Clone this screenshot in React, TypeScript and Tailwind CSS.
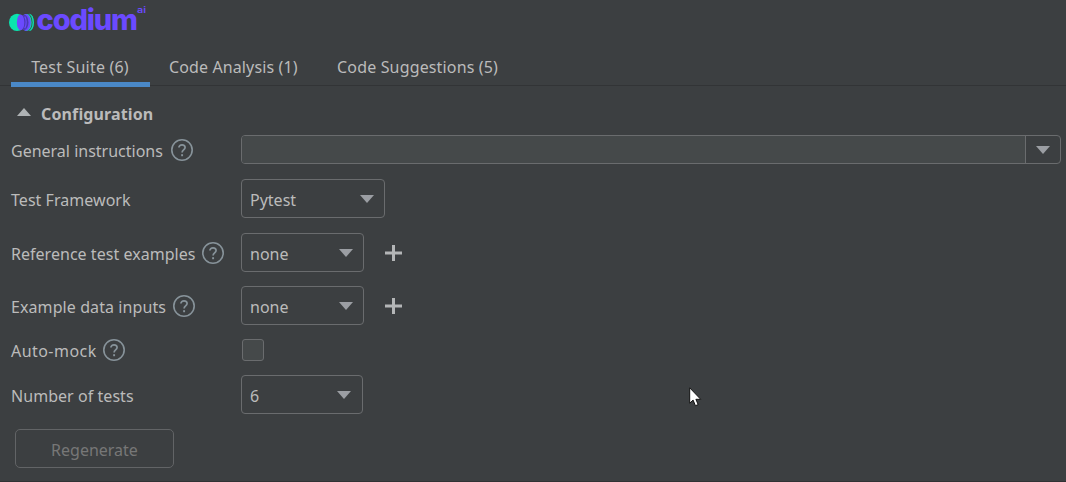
import React from "react";

function Help() {
  return (
    <svg className="h-6 w-6 shrink-0" viewBox="0 0 24 24" fill="none" stroke="#87939a" strokeWidth="1.6">
      <circle cx="12" cy="12" r="10.2" />
      <path d="M8.9 9.6C8.9 7.8 10.2 6.8 12 6.8s3.1 1.1 3.1 2.7c0 2.4-3 2.5-3 5" strokeWidth="1.7" />
      <path d="M12.1 16.2v2" strokeWidth="1.9" />
    </svg>
  );
}

function Arrow({ up = false }: { up?: boolean }) {
  return (
    <svg className="h-[8px] w-[14px] shrink-0" viewBox="0 0 14 8" fill={up ? "#afb3b5" : "#9b9ea3"}>
      <path d={up ? "M0 8 7 0l7 8z" : "M0 0h14L7 8z"} />
    </svg>
  );
}

function Plus() {
  return (
    <svg className="ml-[21px] h-4 w-[17px]" viewBox="0 0 17 16" fill="none" stroke="#b4b6b7" strokeWidth="3">
      <path d="M8.5 0v16M0 8h17" />
    </svg>
  );
}

function Select({ value, width }: { value: string; width: string }) {
  return (
    <div className={`flex h-[39px] items-center justify-between rounded-[4px] border border-[#6a6c6e] pl-[8px] ${width}`}>
      <span className="pt-[3px]">{value}</span>
      <Arrow />
    </div>
  );
}

function Row({ label, tracking = "", className, gap = "", help = false, children }: {
  label: string; tracking?: string; className: string; gap?: string; help?: boolean; children: React.ReactNode;
}) {
  return (
    <div className={`flex items-center ${className}`}>
      <div className="flex w-[230px] shrink-0 items-center">
        <span className={`whitespace-nowrap pt-[3px] ${tracking}`}>{label}</span>
        {help && <span className={gap}><Help /></span>}
      </div>
      {children}
    </div>
  );
}

function Logo() {
  return (
    <svg className="block h-[36px] w-[160px]" viewBox="0 0 160 36">
      <ellipse cx="17" cy="22.4" rx="8" ry="8.7" fill="#0be3ae" />
      <ellipse cx="29.3" cy="22.4" rx="4.7" ry="8.6" fill="#0be3ae" />
      <ellipse cx="27.5" cy="22.4" rx="5" ry="8.8" fill="#3c3f41" />
      <ellipse cx="26.8" cy="22.4" rx="4.9" ry="8.5" fill="#0be3ae" />
      <ellipse cx="25.9" cy="22.4" rx="4.9" ry="8.5" fill="#6b4aff" />
      <ellipse cx="24" cy="22.4" rx="4.5" ry="7.6" fill="#4a38b5" />
      <ellipse cx="20.6" cy="22.4" rx="3.7" ry="7.9" fill="#6b4aff" />
      <path d="M24.8 16.5q2.8 5.9 0 11.8" fill="none" stroke="#6b4aff" strokeWidth="1.2" />
      <text x="36.6" y="30.4" textLength="100" lengthAdjust="spacingAndGlyphs" fill="#6b4aff" className="font-['Inter'] text-[28.5px] font-extrabold tracking-[-1.2px]">codium</text>
      <text x="137" y="13" textLength="9" lengthAdjust="spacingAndGlyphs" fill="#6b4aff" className="font-['Inter'] text-[9px] font-semibold">ai</text>
    </svg>
  );
}

export default function App() {
  return (
    <div className="relative h-[482px] w-full overflow-hidden border-b border-[#303234] bg-[#3c3f41] font-['Noto_Sans',sans-serif] text-[16px] leading-[22px] text-[#bbbbbb]">
      <Logo />
      <nav className="flex h-[50px] border-b border-[#323436] pl-[11px]">
        <div className="flex h-[51px] w-[139px] shrink-0 items-center justify-center border-b-[5px] border-[#4a88c7] pt-[15px] pr-[1px]">
          <span className="tracking-[0.2px]">Test Suite (6)</span>
        </div>
        <div className="pt-[20px] pl-[19px] tracking-[0.12px]">Code Analysis (1)</div>
        <div className="pt-[20px] pl-[39.5px] tracking-[0.15px]">Code Suggestions (5)</div>
      </nav>
      <main className="pl-[11px]">
        <div className="flex h-[49px] items-center pt-[4px] pl-[5.5px]">
          <div className="-mt-[2px] flex"><Arrow up /></div>
          <h2 className="pt-[3px] pl-[10.5px] font-bold tracking-[0.13px]">Configuration</h2>
        </div>
        <Row label="General instructions" className="h-[29px] pr-[5px]" gap="ml-[7px]" help>
          <div className="flex h-[29px] flex-1 overflow-hidden rounded-[4px] border border-[#6a6c6e]">
            <div className="flex-1 bg-[#45494a]" />
            <div className="flex w-[35px] items-center justify-center border-l border-[#6a6c6e]"><Arrow /></div>
          </div>
        </Row>
        <Row label="Test Framework" tracking="tracking-[0.04px]" className="mt-[15px] h-[39px]">
          <Select value="Pytest" width="w-[144px] pr-[10px]" />
        </Row>
        <Row label="Reference test examples" tracking="tracking-[0.03px]" className="mt-[15px] h-[39px]" gap="ml-[5.5px]" help>
          <Select value="none" width="w-[123px] pr-[10px]" /><Plus />
        </Row>
        <Row label="Example data inputs" tracking="tracking-[0.09px]" className="mt-[14px] h-[39px]" gap="ml-[6px]" help>
          <Select value="none" width="w-[123px] pr-[10px]" /><Plus />
        </Row>
        <Row label="Auto-mock" tracking="tracking-[0.45px]" className="mt-[13px] h-[23px]" gap="ml-[5px]" help>
          <div className="ml-[1px] h-[22px] w-[22px] rounded-[3px] border border-[#6a6c6e] bg-[#45494a]" />
        </Row>
        <Row label="Number of tests" tracking="tracking-[0.05px]" className="mt-[14px] h-[39px]">
          <Select value="6" width="w-[122px] pr-[11px]" />
        </Row>
        <button disabled className="mt-[15px] ml-[4px] flex h-[39px] w-[159px] items-center justify-center rounded-[5px] border border-[#626466] pt-[3px] text-[#777777]">Regenerate</button>
      </main>
      <svg className="absolute top-[387px] left-[689px] h-[20px] w-[13px]" viewBox="0 0 13 20">
        <path d="M.7.8v15.4l3.4-3.1 2.3 5.6 2.8-1.1-2.3-5.3h4.8z" fill="white" stroke="#111" strokeWidth="1" />
      </svg>
    </div>
  );
}
